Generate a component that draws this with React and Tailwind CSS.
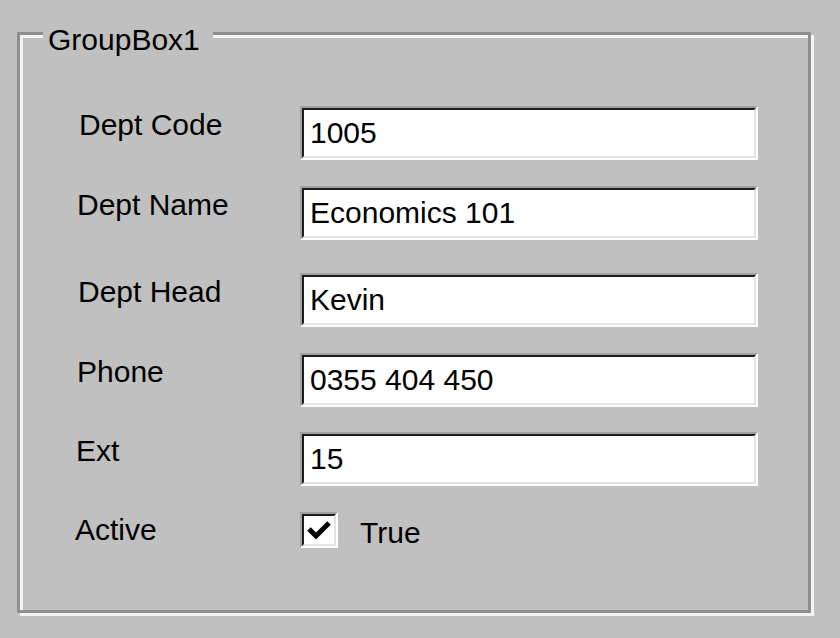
import React from "react";

const fields = [
  { label: "Dept Code", value: "1005", row: "mt-0", pad: "pl-[59px]" },
  { label: "Dept Name", value: "Economics 101", row: "mt-[26px]", pad: "pl-[57px]" },
  { label: "Dept Head", value: "Kevin", row: "mt-[33px]", pad: "pl-[58px]" },
  { label: "Phone", value: "0355 404 450", row: "mt-[26px]", pad: "pl-[57px]" },
  { label: "Ext", value: "15", row: "mt-[25px]", pad: "pl-[56px]" },
];

const TextBox = ({ value }) => (
  <div className="w-[458px] h-[54px] border-2 border-t-[#a0a0a0] border-l-[#a0a0a0] border-b-white border-r-white">
    <div className="h-full bg-white border-2 border-t-[#1c1c1c] border-l-[#1c1c1c] border-b-[#e3e3e3] border-r-[#e3e3e3] pl-[6px] pt-[1px] leading-[44px] whitespace-nowrap">
      {value}
    </div>
  </div>
);

const CheckBox = () => (
  <div className="w-[38px] h-[36px] border-2 border-t-[#a0a0a0] border-l-[#a0a0a0] border-b-white border-r-white">
    <div className="h-full bg-white border-2 border-t-[#1c1c1c] border-l-[#1c1c1c] border-b-[#e3e3e3] border-r-[#e3e3e3] flex items-center justify-center">
      <svg width="26" height="22" viewBox="0 0 26 22">
        <path d="M3 10 L10 17 L23 4" fill="none" stroke="#000" strokeWidth="5" />
      </svg>
    </div>
  </div>
);

export default function App() {
  return (
    <div className="w-[840px] h-[638px] bg-[#c0c0c0] pt-[32px] pl-[17px] font-['Liberation_Sans',Arial,sans-serif] text-[30px] text-black">
      <div className="relative w-[794px] h-[581px] border-[3px] border-[#8f8f8f] shadow-[inset_3px_3px_0_0_#f4f4f4,3px_3px_0_0_#f4f4f4]">
        <div className="absolute left-[23px] top-[-10px] bg-[#c0c0c0] pl-[5px] pr-[13px] leading-[30px]">
          GroupBox1
        </div>

        <div className="flex flex-col pt-[71px]">
          {fields.map((f) => (
            <div key={f.label} className={"flex items-start " + f.row}>
              <div className={"w-[280px] pt-[4px] leading-[30px] " + f.pad}>
                {f.label}
              </div>
              <TextBox value={f.value} />
            </div>
          ))}

          <div className="flex items-start mt-[26px]">
            <div className="w-[280px] pl-[55px] pt-[3px] leading-[30px]">Active</div>
            <CheckBox />
            <div className="ml-[22px] pt-[6px] leading-[30px]">True</div>
          </div>
        </div>
      </div>
    </div>
  );
}
